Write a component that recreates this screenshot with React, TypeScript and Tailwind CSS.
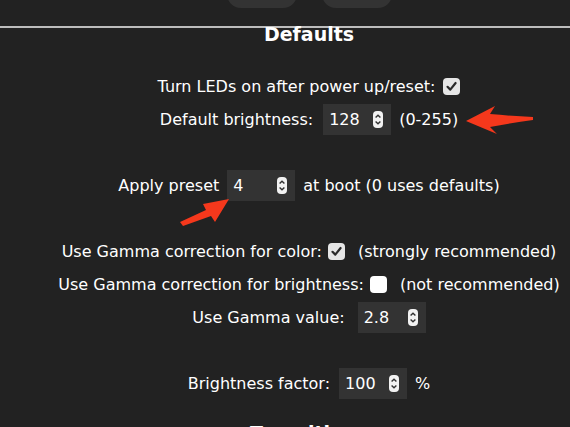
import type { ReactNode } from 'react';

const Spinner = () => (
  <svg width="10" height="17" viewBox="0 0 10 17" className="shrink-0">
    <rect x="0" y="0" width="10" height="17" rx="4" fill="#f2f2f2" />
    <path d="M2.6 6.6 L5 4.2 L7.4 6.6" stroke="#333" strokeWidth="1.4" fill="none" />
    <path d="M2.6 10.4 L5 12.8 L7.4 10.4" stroke="#333" strokeWidth="1.4" fill="none" />
  </svg>
);

const NumInput = ({ value, className = '' }: { value: string; className?: string }) => (
  <span className={`inline-flex w-[68px] h-[31px] bg-[#333] items-center justify-between pl-[6px] pr-[8px] ${className}`}>
    <span>{value}</span>
    <Spinner />
  </span>
);

const Check = ({ checked, className = '' }: { checked?: boolean; className?: string }) => (
  <span
    className={`inline-flex w-[17px] h-[17px] rounded-[4px] items-center justify-center ${
      checked ? 'bg-[#e6e6e6]' : 'bg-white'
    } ${className}`}
  >
    {checked && (
      <svg width="13" height="13" viewBox="0 0 13 13">
        <path d="M2.5 6.8 L5.3 9.6 L10.6 3" stroke="#2a2a2a" strokeWidth="2.2" fill="none" strokeLinecap="round" strokeLinejoin="round" />
      </svg>
    )}
  </span>
);

const Row = ({ children }: { children: ReactNode }) => (
  <div className="h-[33px] flex items-center justify-center whitespace-nowrap">{children}</div>
);

const Spacer = () => <div className="h-[33px]" />;

export default function App() {
  return (
    <div
      className="relative w-[570px] h-[427px] overflow-hidden bg-[#222] text-white text-[16px]"
      style={{ fontFamily: '"DejaVu Sans", Verdana, sans-serif' }}
    >
      <div className="w-[618px]">
        {/* buttons from the section above, mostly scrolled away */}
        <div className="h-[26px] overflow-hidden flex justify-center gap-[25px]">
          <div className="w-[70px] h-[30px] -mt-[22px] rounded-[14px] bg-[#333]" />
          <div className="w-[70px] h-[30px] -mt-[22px] rounded-[14px] bg-[#333]" />
        </div>
        <div className="h-[2px] bg-[#bdbdbd]" />

        <h3 className="-mt-[2px] h-[16px] leading-[16px] text-center font-bold text-[19px] mb-[28px]">Defaults</h3>

        <Row>
          Turn LEDs on after power up/reset:
          <Check checked className="ml-[8px]" />
        </Row>
        <Row>
          Default brightness:
          <NumInput value="128" className="ml-[10px] mr-[8px]" />
          (0-255)
        </Row>
        <Spacer />
        <Row>
          Apply preset
          <NumInput value="4" className="mx-[8px]" />
          at boot (0 uses defaults)
        </Row>
        <Spacer />
        <Row>
          Use Gamma correction for color:
          <Check checked className="ml-[6px] mr-[13px]" />
          (strongly recommended)
        </Row>
        <Row>
          Use Gamma correction for brightness:
          <Check className="ml-[6px] mr-[13px]" />
          (not recommended)
        </Row>
        <Row>
          Use Gamma value:
          <NumInput value="2.8" className="ml-[13px]" />
        </Row>
        <Spacer />
        <Row>
          Brightness factor:
          <NumInput value="100" className="ml-[9px] mr-[8px]" />
          %
        </Row>

        <h3 className="mt-[25px] h-[16px] leading-[16px] text-center font-bold text-[19px]">Transitions</h3>
      </div>

      {/* red annotation arrows */}
      <svg className="absolute left-0 top-0 pointer-events-none" width="570" height="427">
        <path
          d="M466 121 L495 106 L490 114 Q512 116 533 117 L533 120 Q512 123 490 127 L497 134 Z"
          fill="#f5381c"
        />
        <path d="M229 199 L215 222 L211 216 L183 226 L180 222 L206 210 L203 204 Z" fill="#f5381c" />
      </svg>
    </div>
  );
}
